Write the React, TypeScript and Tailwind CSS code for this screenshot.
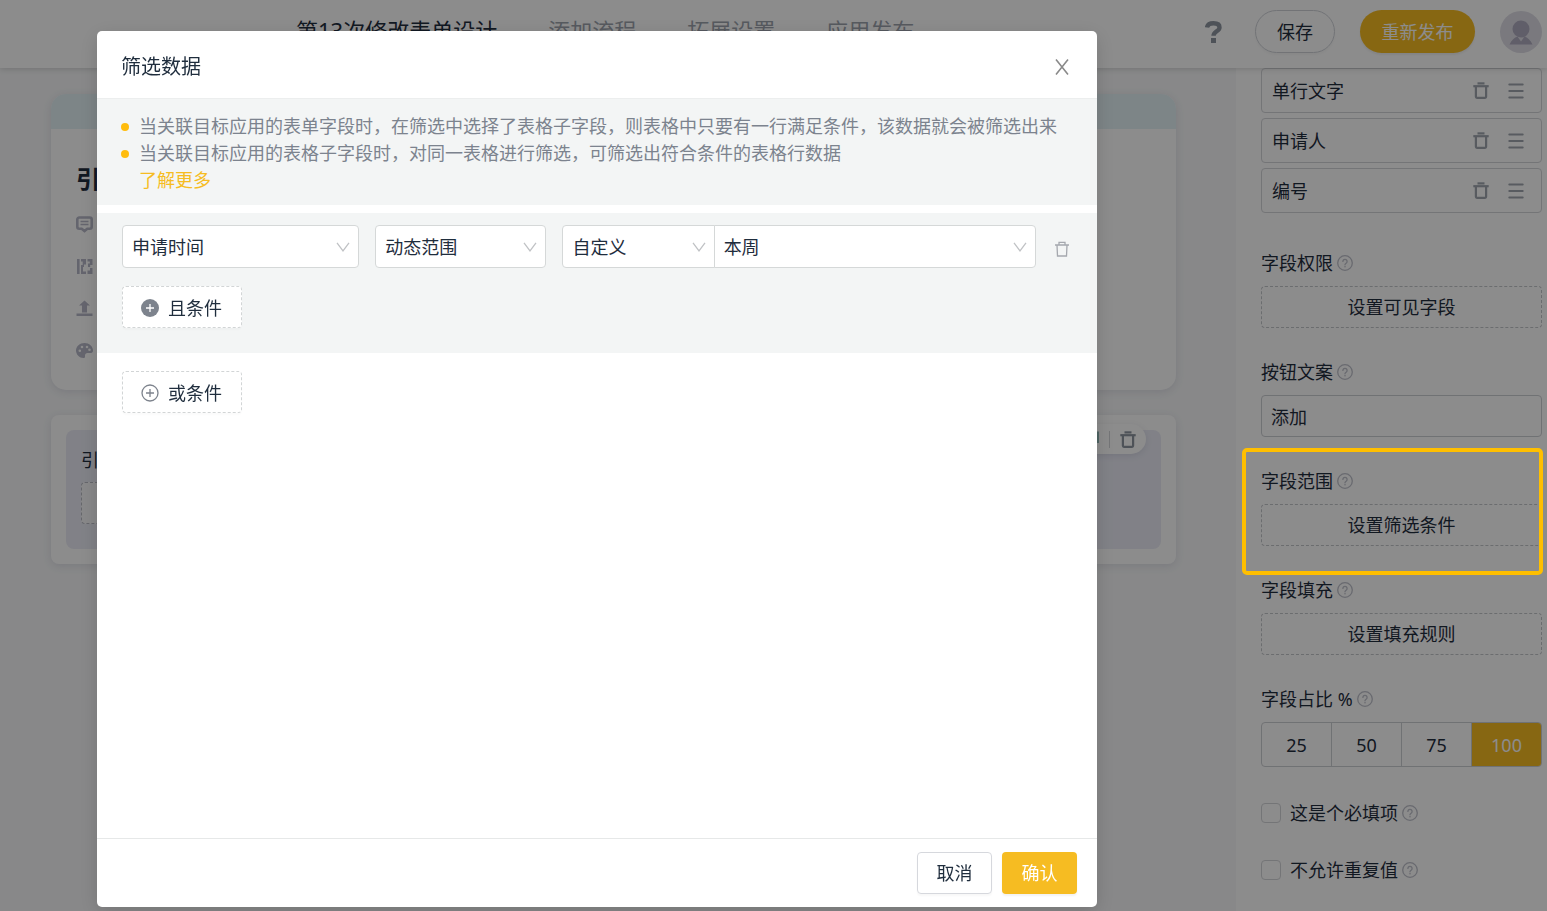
import React from "react";

const FONT = "font-['Noto_Sans','Noto_Sans_CJK_SC',sans-serif]";

function HelpIcon() {
  return (
    <svg className="size-4 text-[#bfc1cb]" viewBox="0 0 16 16" fill="none" stroke="currentColor" strokeWidth="1.3">
      <circle cx="8" cy="8" r="7.3" />
      <path d="M5.900 6.400a2.100 2.100 0 1 1 3.200 1.800c-.8.5-1.100.8-1.100 1.600" strokeLinecap="round" />
      <circle cx="8" cy="11.7" r="0.8" fill="currentColor" stroke="none" />
    </svg>
  );
}

function TrashIcon() {
  return (
    <svg className="h-[17px] w-4" viewBox="0 0 16 17" fill="none" stroke="currentColor" strokeWidth="2.2">
      <path d="M0.3 4.200h15.400" />
      <path d="M4.500 1.400h7" />
      <path d="M2.900 4.200v10.600a1 1 0 0 0 1 1h8.200a1 1 0 0 0 1-1V4.200" />
    </svg>
  );
}

function ThinTrashIcon() {
  return (
    <svg className="size-4" viewBox="0 0 16 16" fill="none" stroke="currentColor" strokeWidth="1.300">
      <path d="M1 4h14M5 4V1.300h6V4M3 4l.5 11h9L13 4" />
    </svg>
  );
}

function MenuIcon() {
  return (
    <svg className="size-4" viewBox="0 0 16 16" fill="none" stroke="currentColor" strokeWidth="2" strokeLinecap="round">
      <path d="M1.300 1.500h13.400M1.300 8h13.400M1.300 14.500h13.400" />
    </svg>
  );
}

function PlusCircle({ solid }: { solid?: boolean }) {
  return (
    <svg className="size-[18px] text-[#7d838d]" viewBox="0 0 18 18" fill="none">
      {solid ? (
        <circle cx="9" cy="9" r="9" fill="currentColor" />
      ) : (
        <circle cx="9" cy="9" r="8" stroke="currentColor" strokeWidth="1.300" />
      )}
      <path d="M9 5v8M5 9h8" stroke={solid ? "#fff" : "currentColor"} strokeWidth="1.300" />
    </svg>
  );
}

function Select({ label, value, className }: { label: string; value: string; className: string }) {
  return (
    <div className={"relative " + className}>
      <select
        aria-label={label}
        defaultValue={value}
        className="h-[43px] w-full appearance-none rounded-[inherit] border border-[#d5d8d8] bg-white pr-8 pl-[9px] text-lg text-[#1f2d3d]"
      >
        <option>{value}</option>
      </select>
      <svg
        className="pointer-events-none absolute top-[17px] right-[9px] h-[10px] w-[14px] text-[#c0c2c5]"
        viewBox="0 0 14 10"
        fill="none"
        stroke="currentColor"
        strokeWidth="1.300"
      >
        <path d="M1 .8l6 8 6-8" />
      </svg>
    </div>
  );
}

function ListItem({ text }: { text: string }) {
  return (
    <li className="flex h-[45px] items-center rounded-[4px] border border-[#d3d5d9] pr-[17px] pl-[10px]">
      <span className="flex-1">{text}</span>
      <div className="flex items-center gap-[19px] text-[#a0a6b0]">
        <button type="button" aria-label={"删除" + text}><TrashIcon /></button>
        <button type="button" aria-label={"排序" + text}><MenuIcon /></button>
      </div>
    </li>
  );
}

function Field({ label, children, highlighted }: { label: string; children: React.ReactNode; highlighted?: boolean }) {
  return (
    <section className="relative">
      <h3 className="flex h-7 items-center gap-1">
        {label}
        <HelpIcon />
      </h3>
      <div className="mt-[9px]">{children}</div>
      {highlighted && (
        <div className="pointer-events-none absolute -top-[19px] -right-px -bottom-[29px] -left-[19px] z-30 rounded-[5px] border-4 border-[#ffbf00]" />
      )}
    </section>
  );
}

function DashedButton({ children }: { children: React.ReactNode }) {
  return (
    <button type="button" className="flex h-[42px] w-full items-center justify-center rounded-[4px] border border-dashed border-[#c4c6ca]">
      {children}
    </button>
  );
}

function Header() {
  return (
    <header className="relative z-[5] flex h-[68px] shrink-0 items-start bg-white pr-[5px] pl-[296px] shadow-[0_1px_6px_rgba(0,0,0,0.16)]">
      <nav className="flex flex-1 gap-[51px] pt-[14px] text-[22px] leading-8 whitespace-nowrap text-[#9da3ad]">
        <a href="#design" className="text-[#1f2d3d]">第13次修改表单设计</a>
        <a href="#flow">添加流程</a>
        <a href="#settings">拓展设置</a>
        <a href="#publish">应用发布</a>
      </nav>
      <div className="flex items-center gap-[25px] pt-[10px] text-lg">
        <button type="button" aria-label="帮助" className="mr-2 text-[#8e96a1]">
          <svg className="h-[22px] w-[17px]" viewBox="0 0 17 22" fill="none">
            <path d="M2 6.500C2.500 3.500 5 2.200 8.500 2.200c3.700 0 6 1.500 6 4.200 0 3.900-6 3.900-6 8.400" stroke="currentColor" strokeWidth="4.400" />
            <rect x="6" y="17" width="5" height="5" fill="currentColor" />
          </svg>
        </button>
        <button type="button" className="h-[43px] w-20 rounded-full border border-[#cfd2d8] text-[#1f2d3d] shadow-[0_2px_2px_rgba(0,0,0,0.03)]">保存</button>
        <button type="button" className="h-[43px] w-[115px] rounded-full bg-[#f6bc22] text-white shadow-[0_2px_2px_rgba(0,0,0,0.06)]">重新发布</button>
        <svg className="size-[42px]" viewBox="0 0 42 42" role="img" aria-label="头像">
          <circle cx="21" cy="21" r="21" fill="#dedde6" />
          <circle cx="21" cy="18" r="8.500" fill="#b0acbf" />
          <path d="M9.500 33.500c2-4.500 5-7 8-8l3.500 5 3.500-5c3 1 6 3.500 8 8z" fill="#b0acbf" />
        </svg>
      </div>
    </header>
  );
}

function Canvas() {
  return (
    <main className="flex min-w-0 flex-1 flex-col gap-[25px] bg-[#f7f8f9] pt-[26px] pr-[60px] pl-[51px]">
      <section className="h-[296px] overflow-hidden rounded-[15px] bg-white shadow-[0_2px_8px_rgba(80,80,120,0.14)]">
        <div className="h-[35px] bg-[#e4f2f6]" />
        <div className="flex flex-col items-start pt-8 pl-[25px]">
          <h1 className="text-2xl leading-9 font-bold text-[#1f2d3d]">引用</h1>
          <ul className="flex flex-col gap-[25px] pt-[19px] text-[#b7b8c8]">
            <li>
              <svg className="size-[17px]" viewBox="0 0 17 17" fill="none" stroke="currentColor" strokeWidth="2.600">
                <path d="M3.300 1.500h10.400a2 2 0 0 1 2 2v7.200a2 2 0 0 1-2 2h-2.400L8.500 15l-2.800-2.300H3.300a2 2 0 0 1-2-2V3.500a2 2 0 0 1 2-2z" />
                <path d="M4.500 5.500h8M4.500 8.500h8" strokeWidth="1.700" />
              </svg>
            </li>
            <li>
              <svg className="size-[17px]" viewBox="0 0 17 17" fill="currentColor">
                <path d="M1 1h2.600v15H1zM5 1h5v5.500H8V9H7v4.500h3V16H5V7h1.700V3.500H5zM11.500 1h5v6h-2.300v2H12V5.500h1.800V3.500h-2.300zM14 10h2.500v6h-5v-3.500H14z" />
              </svg>
            </li>
            <li>
              <svg className="size-[17px]" viewBox="0 0 17 17" fill="currentColor">
                <path d="M8.500 .5l5.500 5h-3v7h-5v-7h-3zM0.500 13.500h16v2.500H.5z" />
              </svg>
            </li>
            <li>
              <svg className="size-[17px]" viewBox="0 0 17 17" fill="currentColor" fillRule="evenodd">
                <path d="M8.500 1C3.800 1 0 4.500 0 8.500S3.500 16 7.500 16c2 0 1.500-1.800 1.500-2.500 0-1.500 1-2.500 2.500-2.500H15c1.300 0 2-1 2-2.500C17 4.500 13.200 1 8.500 1zM3.800 10a1.300 1.300 0 1 1 0-2.600 1.300 1.300 0 0 1 0 2.600zM6 6.300a1.300 1.300 0 1 1 0-2.600 1.300 1.300 0 0 1 0 2.600zm5 0a1.300 1.300 0 1 1 0-2.600 1.300 1.300 0 0 1 0 2.600zM13.500 9a1.300 1.300 0 1 1 0-2.600 1.300 1.300 0 0 1 0 2.600z" />
              </svg>
            </li>
          </ul>
        </div>
      </section>
      <section className="rounded-lg bg-white p-[15px] shadow-[0_2px_8px_rgba(80,80,120,0.14)]">
        <div className="relative h-[119px] rounded-lg bg-[#ebecf6] px-[15px] pt-4 text-lg text-[#1f2d3d]">
          <p className="leading-7">引用</p>
          <button type="button" className="mt-2 h-[42px] w-[120px] rounded-[4px] border border-dashed border-[#b9bbc4] bg-[#f8f8fa]">添加</button>
          <div className="absolute -top-[6px] right-[15px] flex h-[30px] items-center gap-[10px] rounded-full bg-white pr-[10px] pl-3 text-[#8e96a1] shadow-[0_2px_6px_rgba(80,80,120,0.14)]">
            <svg className="size-4" viewBox="0 0 16 16" fill="none" stroke="#8fb5b4" strokeWidth="2">
              <path d="M1 4h10v11H1zM5 1.500h10V12" />
            </svg>
            <span className="h-[17px] w-px bg-[#d3d5d9]" />
            <button type="button" aria-label="删除"><TrashIcon /></button>
          </div>
        </div>
      </section>
    </main>
  );
}

function Sidebar() {
  const ratios = ["25", "50", "75", "100"];
  return (
    <aside className="w-[311px] shrink-0 overflow-hidden bg-white pr-[5px] pl-[25px] text-lg text-[#1f2d3d]">
      <ul className="flex flex-col gap-[5px]">
        <ListItem text="单行文字" />
        <ListItem text="申请人" />
        <ListItem text="编号" />
      </ul>
      <div className="flex flex-col gap-[30px] pt-9">
        <Field label="字段权限"><DashedButton>设置可见字段</DashedButton></Field>
        <Field label="按钮文案">
          <input aria-label="按钮文案" defaultValue="添加" className="block h-[42px] w-full rounded-[4px] border border-[#cdcfd3] px-[9px]" />
        </Field>
        <Field label="字段范围" highlighted><DashedButton>设置筛选条件</DashedButton></Field>
        <Field label="字段填充"><DashedButton>设置填充规则</DashedButton></Field>
        <Field label="字段占比 %">
          <div className="flex h-[45px] divide-x divide-[#cdcfd3] overflow-hidden rounded-[4px] border border-[#cdcfd3]">
            {ratios.map((r) => (
              <button key={r} type="button" className={r === "100" ? "flex-1 bg-[#f6bc22] text-white" : "flex-1"}>{r}</button>
            ))}
          </div>
        </Field>
        <div className="flex flex-col gap-[29px] pt-0.5">
          {["这是个必填项", "不允许重复值"].map((t) => (
            <div key={t} className="flex h-7 items-center gap-1">
              <label className="flex items-center gap-[9px]">
                <input type="checkbox" className="size-5 appearance-none rounded-[4px] border border-[#d3d5d9]" />
                {t}
              </label>
              <HelpIcon />
            </div>
          ))}
        </div>
      </div>
    </aside>
  );
}

function ConditionButton({ solid, children }: { solid?: boolean; children: React.ReactNode }) {
  return (
    <button type="button" className="flex h-[42px] w-[120px] items-center gap-[9px] rounded-[4px] border border-dashed border-[#d2d5d6] bg-white pt-0.5 pl-[18px] shadow-[0_2px_2px_rgba(0,0,0,0.02)]">
      <PlusCircle solid={solid} />
      {children}
    </button>
  );
}

function FilterDialog() {
  return (
    <div className="fixed inset-0 z-20 bg-black/45 pt-[31px] pr-[450px] pb-1 pl-[97px]">
      <div role="dialog" aria-modal="true" aria-labelledby="filter-title" className="flex h-full flex-col rounded-[5px] bg-white text-lg text-[#1f2d3d] shadow-[0_5px_20px_rgba(0,0,0,0.15)]">
        <div className="flex h-[68px] shrink-0 items-center justify-between border-b border-[#eceeee] pt-1 pr-[27px] pl-6">
          <h2 id="filter-title" className="text-xl">筛选数据</h2>
          <button type="button" aria-label="关闭" className="text-[#8a8a8a]">
            <svg className="size-4" viewBox="0 0 16 16" fill="none" stroke="currentColor" strokeWidth="1.600">
              <path d="M2 .5l12 15M14 .5L2 15.500" />
            </svg>
          </button>
        </div>
        <div className="bg-[#f3f5f5] px-6 pt-[14px] pb-[11px] leading-[27px] whitespace-nowrap text-[#7c838e]">
          <ul>
            <li className="flex items-center gap-[10px]">
              <span className="size-2 rounded-full bg-[#ffbc0d]" />
              当关联目标应用的表单字段时，在筛选中选择了表格子字段，则表格中只要有一行满足条件，该数据就会被筛选出来
            </li>
            <li className="flex items-center gap-[10px]">
              <span className="size-2 rounded-full bg-[#ffbc0d]" />
              当关联目标应用的表格子字段时，对同一表格进行筛选，可筛选出符合条件的表格行数据
            </li>
          </ul>
          <a href="#more" className="block pl-[18px] text-[#f6bc22]">了解更多</a>
        </div>
        <div className="mt-2 bg-[#f3f5f5] px-[25px] pt-3 pb-[25px]">
          <div className="mb-[18px] grid grid-cols-[237fr_171fr_473fr_20px] items-center gap-4">
            <Select label="字段" value="申请时间" className="rounded-[4px]" />
            <Select label="条件" value="动态范围" className="rounded-[4px]" />
            <div className="grid grid-cols-[151fr_322fr]">
              <Select label="范围类型" value="自定义" className="-mr-px rounded-l-[4px]" />
              <Select label="范围" value="本周" className="rounded-r-[4px]" />
            </div>
            <button type="button" aria-label="删除条件" className="flex justify-center pt-1 text-[#a5a8ae]"><ThinTrashIcon /></button>
          </div>
          <ConditionButton solid>且条件</ConditionButton>
        </div>
        <div className="flex-1 px-[25px] pt-[18px]">
          <ConditionButton>或条件</ConditionButton>
        </div>
        <div className="flex justify-end gap-[10px] border-t border-[#e6e8e8] px-5 py-[13px]">
          <button type="button" className="h-[42px] w-[75px] rounded-[4px] border border-[#d6d8dd] bg-white shadow-[0_2px_2px_rgba(0,0,0,0.03)]">取消</button>
          <button type="button" className="h-[42px] w-[75px] rounded-[4px] bg-[#f6bc22] text-white shadow-[0_2px_2px_rgba(0,0,0,0.05)]">确认</button>
        </div>
      </div>
    </div>
  );
}

export default function App() {
  return (
    <div className={"flex h-screen flex-col overflow-hidden font-normal " + FONT}>
      <Header />
      <div className="flex min-h-0 flex-1">
        <Canvas />
        <Sidebar />
      </div>
      <FilterDialog />
    </div>
  );
}
